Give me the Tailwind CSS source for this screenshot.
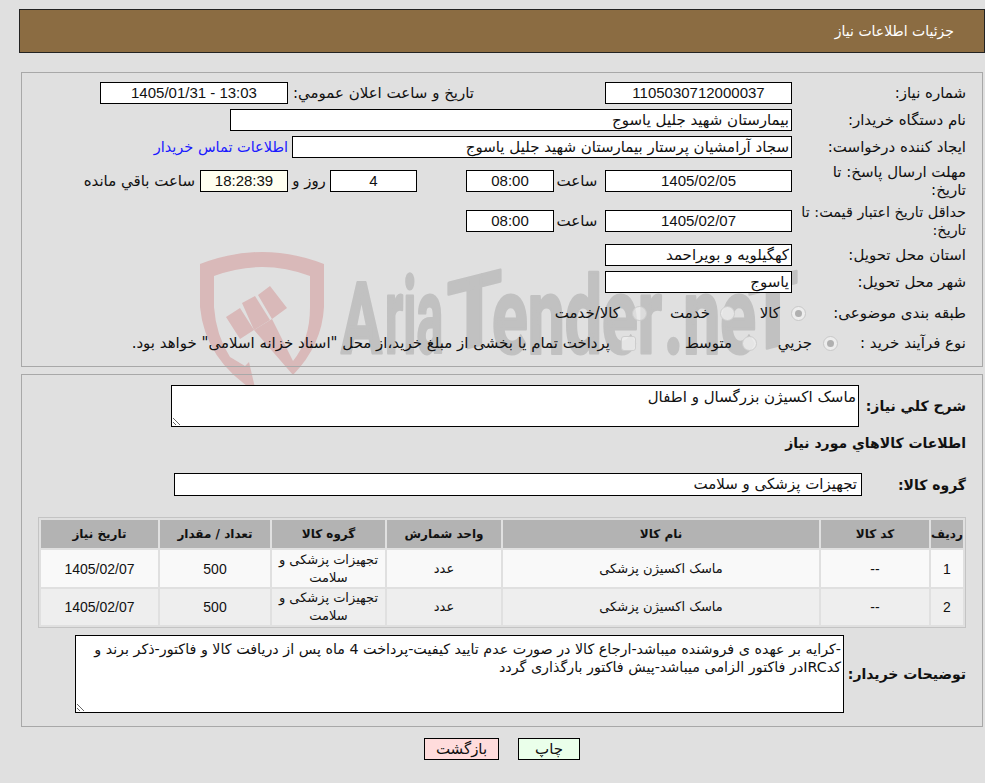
<!DOCTYPE html>
<html lang="fa" dir="rtl">
<head>
<meta charset="utf-8">
<title>جزئیات اطلاعات نیاز</title>
<script src="https://cdn.jsdelivr.net/npm/@tailwindcss/browser@4"></script>
</head>
<body class="m-0 bg-[#e0e0e0]">
<div class="relative w-[985px] h-[783px] overflow-hidden bg-[#e0e0e0] text-[15px] leading-[18px] text-[#111] font-['DejaVu_Sans',sans-serif]">

  <svg class="absolute left-0 top-0 z-0 [direction:ltr]" width="985" height="783" viewBox="0 0 985 783">
    <path fill="#d9b9b9" d="M200 264 Q262 240 324 264 L324 307 Q322 345 293 375 L254 330 L272 319 L293 361 Q310 340 310 307 L310 276 Q262 258 214 276 L214 307 Q216 335 230 357 L245 366 L249 362 L256 392 Q205 360 200 307 Z"/>
    <path fill="#d9b9b9" d="M270 286 L287 308 L272 319 L258 295 Z M242 303 L255 296 L270 320 L254 330 Z M226 317 L240 308 L254 330 L240 339 Z"/>
    <g font-family="Roboto" font-weight="700" font-size="108" fill="#c1c1c1" stroke="#c1c1c1" stroke-width="3" stroke-linejoin="round">
      <text x="341" y="353" font-size="98" textLength="41" lengthAdjust="spacingAndGlyphs">A</text>
      <text x="385" y="353" textLength="58" lengthAdjust="spacingAndGlyphs">ria</text>
      <text transform="translate(447 353) skewY(-14)" font-size="98" textLength="55" lengthAdjust="spacingAndGlyphs">T</text>
      <text x="492" y="353" textLength="170" lengthAdjust="spacingAndGlyphs">ender</text>
      <text x="664" y="353" textLength="92" lengthAdjust="spacingAndGlyphs">.ne</text>
      <text transform="translate(748 353) skewY(-14)" font-size="98" textLength="50" lengthAdjust="spacingAndGlyphs">T</text>
    </g>
  </svg>

  <header class="relative z-10 ml-[19px] mr-0 mt-[9px] h-[44px] border border-[#222] bg-[#8b6c42] pr-[30px] leading-[42px] text-[14px] text-white">جزئیات اطلاعات نیاز</header>

  <section class="relative z-10 ml-[21px] mr-[2px] mt-[19px] h-[295px] border border-[#a8a8a8] pr-[16px] pt-[9px]">
    <div class="flex h-[22px] items-center">
      <div class="w-[166px]">شماره نیاز:</div>
      <div class="mr-[8px] w-[187px] h-[22px] border border-black bg-white text-center font-['Liberation_Sans'] text-[15px] leading-[20px]">1105030712000037</div>
      <div class="mr-[131px] w-[181px] whitespace-nowrap">تاریخ و ساعت اعلان عمومي:</div>
      <div class="mr-[5px] w-[188px] h-[22px] border border-black bg-white text-center font-['Liberation_Sans'] text-[15px] leading-[20px]" dir="ltr">1405/01/31 - 13:03</div>
    </div>
    <div class="mt-[5px] flex h-[22px] items-center">
      <div class="w-[166px]">نام دستگاه خریدار:</div>
      <div class="mr-[8px] w-[562px] h-[22px] border border-black bg-white pr-[2px] leading-[20px]">بیمارستان شهید جلیل یاسوج</div>
    </div>
    <div class="mt-[5px] flex h-[22px] items-center">
      <div class="w-[166px] whitespace-nowrap">ایجاد کننده درخواست:</div>
      <div class="mr-[8px] w-[500px] h-[22px] border border-black bg-white pr-[2px] leading-[20px]">سجاد آرامشیان پرستار بیمارستان شهید جلیل یاسوج</div>
      <a class="mr-[4px] text-[14.5px] text-[#1a1aff]" href="#">اطلاعات تماس خریدار</a>
    </div>
    <div class="mt-[4px] flex h-[38px] items-center">
      <div class="w-[166px]">مهلت ارسال پاسخ: تا<br>تاریخ:</div>
      <div class="mr-[8px] w-[187px] h-[22px] border border-black bg-white text-center font-['Liberation_Sans'] text-[15px] leading-[20px]">1405/02/05</div>
      <div class="mr-[5px] w-[46px] text-center">ساعت</div>
      <div class="w-[88px] h-[22px] border border-black bg-white text-center font-['Liberation_Sans'] text-[15px] leading-[20px]">08:00</div>
      <div class="mr-[49px] w-[87px] h-[22px] border border-black bg-white text-center font-['Liberation_Sans'] text-[15px] leading-[20px]">4</div>
      <div class="w-[42px] text-center">روز و</div>
      <div class="w-[88px] h-[22px] border border-black bg-[#fffff0] text-center font-['Liberation_Sans'] text-[15px] leading-[20px]">18:28:39</div>
      <div class="mr-[5px] whitespace-nowrap">ساعت باقي مانده</div>
    </div>
    <div class="mt-[2px] flex h-[38px] items-center">
      <div class="w-[166px] shrink-0 whitespace-nowrap text-[14.4px]">حداقل تاریخ اعتبار قیمت: تا<br>تاریخ:</div>
      <div class="mr-[8px] w-[187px] h-[22px] border border-black bg-white text-center font-['Liberation_Sans'] text-[15px] leading-[20px]">1405/02/07</div>
      <div class="mr-[5px] w-[46px] text-center">ساعت</div>
      <div class="w-[88px] h-[22px] border border-black bg-white text-center font-['Liberation_Sans'] text-[15px] leading-[20px]">08:00</div>
    </div>
    <div class="mt-[4px] flex h-[22px] items-center">
      <div class="w-[166px]">استان محل تحویل:</div>
      <div class="mr-[8px] w-[187px] h-[22px] border border-black bg-white pr-[2px] leading-[20px]">کهگیلویه و بویراحمد</div>
    </div>
    <div class="mt-[5px] flex h-[22px] items-center">
      <div class="w-[166px]">شهر محل تحویل:</div>
      <div class="mr-[8px] w-[187px] h-[22px] border border-black bg-white pr-[2px] leading-[20px]">یاسوج</div>
    </div>
    <div class="mt-[9px] flex h-[22px] items-center">
      <div class="w-[160px] whitespace-nowrap">طبقه بندی موضوعی:</div>
      <span class="flex h-[15px] w-[15px] items-center justify-center rounded-full border border-[#c8c8c8] bg-[#f0f0f0]/80"><span class="h-[7px] w-[7px] rounded-full bg-[#b0b0b0]"></span></span>
      <div class="mr-[11px] w-[20px] whitespace-nowrap">کالا</div>
      <span class="mr-[25px] h-[15px] w-[15px] rounded-full border border-[#ccc] bg-[#eee]/80"></span>
      <div class="mr-[10px] w-[40px] whitespace-nowrap">خدمت</div>
      <span class="mr-[23px] h-[15px] w-[15px] rounded-full border border-[#ccc] bg-[#eee]/60"></span>
      <div class="mr-[12px] whitespace-nowrap">کالا/خدمت</div>
    </div>
    <div class="mt-[8px] flex h-[22px] items-center">
      <div class="w-[128px] whitespace-nowrap">نوع فرآیند خرید :</div>
      <span class="flex h-[15px] w-[15px] items-center justify-center rounded-full border border-[#c8c8c8] bg-[#f0f0f0]/80"><span class="h-[7px] w-[7px] rounded-full bg-[#b0b0b0]"></span></span>
      <div class="mr-[11px] w-[34px] whitespace-nowrap">جزیي</div>
      <span class="mr-[21px] h-[15px] w-[15px] rounded-full border border-[#ccc] bg-[#eee]/80"></span>
      <div class="mr-[10px] w-[45px] whitespace-nowrap">متوسط</div>
      <span class="mr-[51px] h-[15px] w-[15px] rounded-[3px] border border-[#ccc] bg-[#eee]/80"></span>
      <div class="mr-[11px] whitespace-nowrap">پرداخت تمام یا بخشی از مبلغ خرید،از محل "اسناد خزانه اسلامی" خواهد بود.</div>
    </div>
  </section>

  <section class="relative z-10 ml-[21px] mr-[2px] mt-[7px] h-[353px] border border-[#a8a8a8] pr-[16px] pt-[10px]">
    <div class="flex h-[42px] items-center">
      <div class="w-[102px] text-[14px] font-bold">شرح کلي نياز:</div>
      <textarea readonly class="mr-[5px] h-[42px] w-[688px] border border-black bg-white px-[2px] pt-[2px] text-[15px] leading-[18px] outline-none">ماسک اکسیژن بزرگسال و اطفال</textarea>
    </div>
    <h2 class="mt-[6px] h-[20px] text-[14px] font-bold leading-[20px]">اطلاعات کالاهاي مورد نياز</h2>
    <div class="mt-[20px] flex h-[23px] items-center">
      <div class="w-[104px] text-[14px] font-bold">گروه کالا:</div>
      <div class="w-[688px] h-[23px] border border-black bg-white pr-[4px] leading-[21px]">تجهیزات پزشکی و سلامت</div>
    </div>
    <table class="mt-[21px] w-[928px] table-fixed border-separate border-spacing-[2px] border border-[#c4c4c4] text-center text-[13px]">
      <colgroup>
        <col class="w-[32px]"><col class="w-[108px]"><col class="w-[316px]"><col class="w-[114px]"><col class="w-[113px]"><col class="w-[110px]"><col class="w-[117px]">
      </colgroup>
      <thead>
        <tr class="h-[28px] bg-[#b3b3b3] text-[12px] font-bold">
          <th class="p-0">ردیف</th><th class="p-0">کد کالا</th><th class="p-0">نام کالا</th><th class="p-0">واحد شمارش</th><th class="p-0">گروه کالا</th><th class="p-0">تعداد / مقدار</th><th class="p-0">تاریخ نیاز</th>
        </tr>
      </thead>
      <tbody>
        <tr class="h-[37px] bg-[#f9f9f9]">
          <td class="p-0 font-['Liberation_Sans'] text-[14px]">1</td><td class="p-0 font-['Liberation_Sans'] text-[14px]">--</td><td class="p-0">ماسک اکسیژن پزشکی</td><td class="p-0">عدد</td><td class="p-0 leading-[18px]">تجهیزات پزشکی و سلامت</td><td class="p-0 font-['Liberation_Sans'] text-[14px]">500</td><td class="p-0 font-['Liberation_Sans'] text-[14px]">1405/02/07</td>
        </tr>
        <tr class="h-[36px] bg-[#eeeeee]">
          <td class="p-0 font-['Liberation_Sans'] text-[14px]">2</td><td class="p-0 font-['Liberation_Sans'] text-[14px]">--</td><td class="p-0">ماسک اکسیژن پزشکی</td><td class="p-0">عدد</td><td class="p-0 leading-[18px]">تجهیزات پزشکی و سلامت</td><td class="p-0 font-['Liberation_Sans'] text-[14px]">500</td><td class="p-0 font-['Liberation_Sans'] text-[14px]">1405/02/07</td>
        </tr>
      </tbody>
    </table>
    <div class="mt-[7px] flex h-[78px] items-center">
      <div class="w-[122px] text-[14px] font-bold">توضیحات خریدار:</div>
      <textarea readonly class="h-[78px] w-[769px] border border-black bg-white px-[2px] pt-[4px] text-[14.3px] leading-[18px] outline-none">-کرایه بر عهده ی فروشنده میباشد-ارجاع کالا در صورت عدم تایید کیفیت-پرداخت 4 ماه پس از دریافت کالا و فاکتور-ذکر برند و کدIRCدر فاکتور الزامی میباشد-پیش فاکتور بارگذاری گردد</textarea>
    </div>
  </section>

  <div class="relative z-10 mt-[11px] flex h-[22px] justify-center gap-[19px] pl-[19px]">
    <button class="h-[22px] w-[62px] border border-black bg-[#eaffea] text-[15px]">چاپ</button>
    <button class="h-[22px] w-[75px] border border-black bg-[#ffdcdc] text-[15px]">بازگشت</button>
  </div>
</div>
</body>
</html>
